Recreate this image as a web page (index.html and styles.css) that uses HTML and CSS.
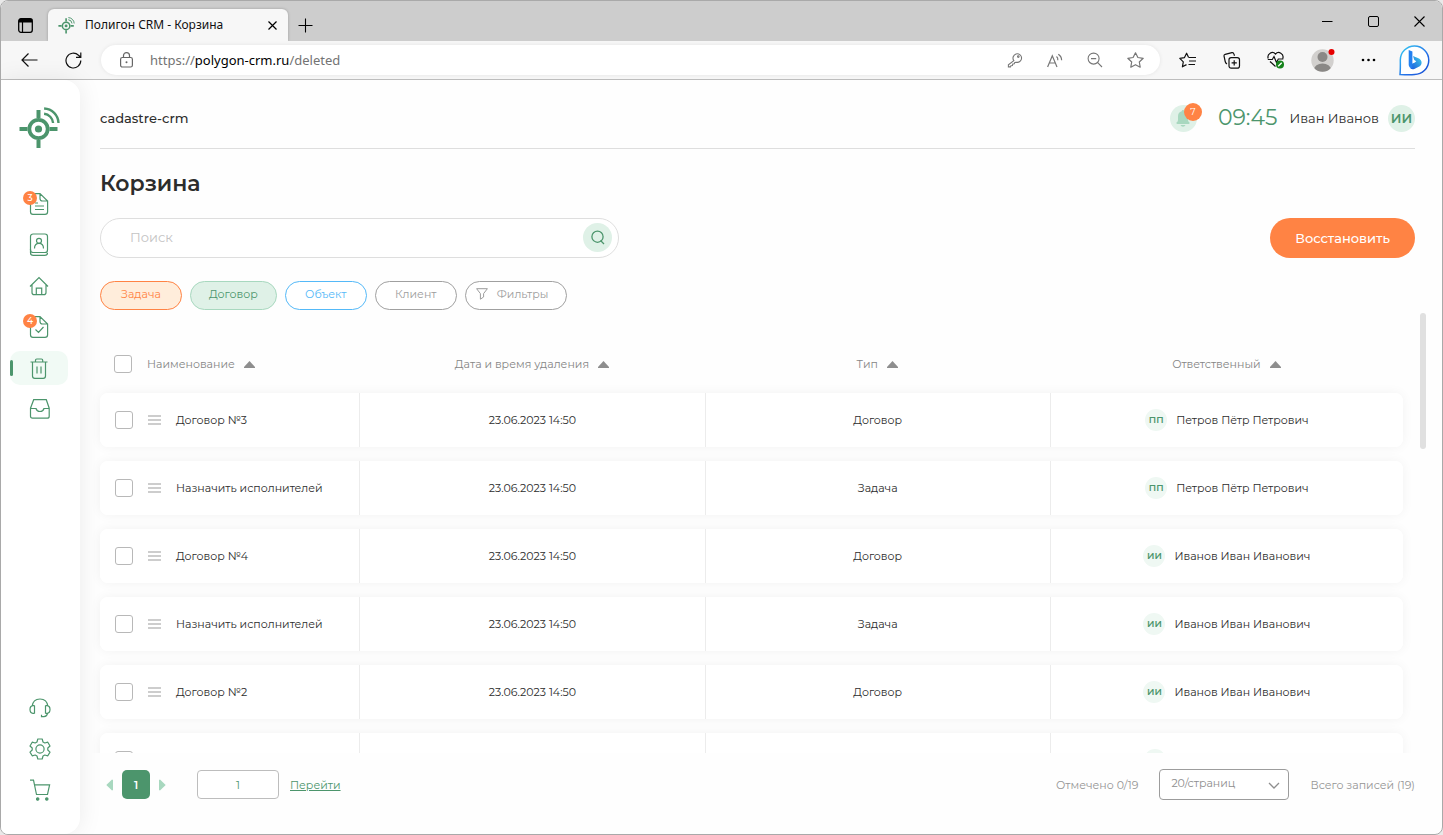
FILE: index.html
```html
<!DOCTYPE html>
<html lang="ru">
<head>
<meta charset="utf-8">
<title>Полигон CRM - Корзина</title>
<link rel="stylesheet" href="styles.css">
</head>
<body>
<svg class="sprite" aria-hidden="true">
  <symbol id="logo" viewBox="0 0 40 42">
    <g fill="none" stroke="#4c956c">
      <circle cx="19" cy="22" r="9.2" stroke-width="3.8"/>
      <path d="M0 22h8M30 22h8M19 3v8M19 33v8" stroke-width="4"/>
      <path d="M24.6 1.500A15 15 0 0 1 39 16M24.6 6.800A10 10 0 0 1 33.6 16" stroke-width="2.4"/>
    </g>
    <circle cx="19" cy="22" r="3.6" fill="#4c956c"/>
  </symbol>
  <symbol id="drag" viewBox="0 0 13 10"><path d="M0 1h13M0 5h13M0 9h13" stroke="#bdbdbd" stroke-width="1.6"/></symbol>
  <symbol id="sort" viewBox="0 0 11 7"><path d="M5.5 0L11 6v1H0V6z" fill="#8e8e8e"/></symbol>
</svg>

<div class="window">
  <div class="tabbar">
    <button class="chrome-btn tabs-menu" aria-label="Меню вкладок"><svg width="15" height="15" viewBox="0 0 15 15"><rect x=".7" y=".7" width="13.6" height="13.6" rx="2.2" fill="none" stroke="#000" stroke-width="1.3"/><path d="M1 1h13v3.6H1z"/><path d="M4.5 4v10" stroke="#000" stroke-width="1.2"/></svg></button>
    <div class="tab">
      <svg width="17" height="17"><use href="#logo"/></svg>
      <span class="tab-title">Полигон CRM - Корзина</span>
      <button class="chrome-btn" aria-label="Закрыть вкладку"><svg width="9" height="9" viewBox="0 0 9 9"><path d="M.5.5l8 8M8.500.5l-8 8" stroke="#000" stroke-width="1.2"/></svg></button>
    </div>
    <button class="chrome-btn new-tab" aria-label="Новая вкладка"><svg width="15" height="15" viewBox="0 0 15 15"><path d="M7.500.5v14M.5 7.500h14" stroke="#000" stroke-width="1.1"/></svg></button>
    <div class="window-controls">
      <button class="chrome-btn" aria-label="Свернуть"><svg width="11" height="11" viewBox="0 0 11 11"><path d="M0 5.500h10.500" stroke="#000"/></svg></button>
      <button class="chrome-btn" aria-label="Развернуть"><svg width="11" height="11" viewBox="0 0 11 11"><rect x=".5" y=".5" width="10" height="10" rx="1.500" fill="none" stroke="#000"/></svg></button>
      <button class="chrome-btn" aria-label="Закрыть"><svg width="11" height="11" viewBox="0 0 11 11"><path d="M.5.5l10 10M10.500.5l-10 10" stroke="#000" stroke-width="1.100"/></svg></button>
    </div>
  </div>

  <div class="toolbar">
    <button class="chrome-btn back" aria-label="Назад"><svg width="17" height="14" viewBox="0 0 17 14"><path d="M16.500 7H1M7.500.5L1 7l6.500 6.500" fill="none" stroke="#111" stroke-width="1.200"/></svg></button>
    <button class="chrome-btn reload" aria-label="Обновить"><svg width="17" height="17" viewBox="0 0 17 17"><path d="M15.800 8.500A7.400 7.400 0 1 1 13.500 3.200L15.500 5M15.800.5V5.300H11" fill="none" stroke="#111" stroke-width="1.200"/></svg></button>
    <div class="address">
      <svg width="13" height="16" viewBox="0 0 13 16"><rect x=".6" y="5.500" width="11.800" height="9.500" rx="1.800" fill="none" stroke="#666" stroke-width="1.200"/><path d="M3.500 5.500V3.600a3 3 0 0 1 6 0v1.900" fill="none" stroke="#666" stroke-width="1.200"/><circle cx="6.500" cy="10.300" r="1" fill="#666"/></svg>
      <span class="url">https://<b>polygon-crm.ru</b>/deleted</span>
      <div class="address-icons">
        <svg width="16" height="16" viewBox="0 0 16 16" fill="none" stroke="#777" stroke-width="1.100"><path d="M6.800 8.600A4.300 4.300 0 1 1 9 10.200l-1.200.3-.5 1.300-1.500.2-.4 1.500-1.500.2-.4 1.200H1.400v-2.100z"/><circle cx="11.300" cy="4.600" r=".8"/></svg>
        <svg width="16" height="15" viewBox="0 0 16 15" fill="none" stroke="#777" stroke-width="1.200"><path d="M.6 14L5.300 2.800 10 14M2.300 10h6M9.500 3.500q1.600 1.300 1.300 3.700M11.300 1.200q3.400 2.300 3.300 6"/></svg>
        <svg width="16" height="16" viewBox="0 0 16 16" fill="none" stroke="#777" stroke-width="1.100"><circle cx="6.600" cy="6.600" r="5.500"/><path d="M4 6.600h5.200M10.700 10.700l4.300 4.300"/></svg>
        <svg width="17" height="16" viewBox="0 0 17 16" fill="none" stroke="#777" stroke-width="1.200" stroke-linejoin="round"><path d="M8.500.8l2.400 4.700 5.300.8-3.900 3.700.9 5.200-4.700-2.500-4.700 2.500.9-5.200L.8 6.300l5.300-.8z"/></svg>
      </div>
    </div>
    <div class="tool-icons">
      <svg width="18" height="17" viewBox="0 0 18 17" fill="none" stroke="#111" stroke-width="1.200" stroke-linejoin="round"><path d="M9.500 5.300L7.600 1.200 5.500 5.600.8 6.300l3.500 3.500-.9 5L7.500 12.600M9.500 5.500H17M10 9h7M9.500 12.500H16"/></svg>
      <svg width="18" height="17" viewBox="0 0 18 17" fill="none" stroke="#111" stroke-width="1.200"><rect x="6" y="5.600" width="10.500" height="10.500" rx="2.200"/><path d="M11.200 8.300v5.200M8.600 10.900h5.200M4 12Q2.600 11.300 2.200 9.500L1.100 4.400Q.7 2.800 2.200 2.300L8.900.7q1.600-.3 2 1.200l.6 1.900"/></svg>
      <svg width="18" height="18" viewBox="0 0 18 18" fill="none" stroke="#111" stroke-width="1.200"><path d="M1.200 7.500C-.3 2.700 5.600-.5 8.500 3.100 11.400-.5 17.300 2.700 15.800 7.500M3 10.500l5.500 5M.8 8.500h4.500L7 5.500l2.500 6 1.800-3.500h5"/><circle cx="13" cy="13.600" r="4" fill="#14821a" stroke="none"/><path d="M11.200 15.200l3.500-3.500" stroke="#fff" stroke-width="1.300"/></svg>
      <svg width="24" height="24" viewBox="0 0 24 24"><clipPath id="face"><circle cx="11.500" cy="12.500" r="11.200"/></clipPath><g clip-path="url(#face)"><path d="M0 0h24v24H0z" fill="#d2d0ce"/><circle cx="11.500" cy="9" r="5" fill="#8a8886"/><ellipse cx="11.500" cy="21.500" rx="8.500" ry="6" fill="#8a8886"/></g><circle cx="20.500" cy="4" r="3" fill="#e60000"/></svg>
      <svg width="15" height="4" viewBox="0 0 15 4"><circle cx="2" cy="2" r="1.300"/><circle cx="7.500" cy="2" r="1.300"/><circle cx="13" cy="2" r="1.300"/></svg>
      <svg class="bing" width="31" height="31" viewBox="0 0 31 31"><defs><linearGradient id="bing" x1="0" y1="0" x2="1" y2="1"><stop offset="0" stop-color="#37cdf2"/><stop offset=".6" stop-color="#2470e8"/><stop offset="1" stop-color="#174ad0"/></linearGradient><linearGradient id="bowl" x1="0" y1="1" x2="1" y2="0"><stop offset="0" stop-color="#1b55dc"/><stop offset="1" stop-color="#3fd0e8"/></linearGradient></defs><path d="M15.500 1a14 14 0 1 1 0 28.500Q11 30 1 29.500 1.500 24 1.300 15A14.200 14.200 0 0 1 15.500 1z" fill="#fff" stroke="url(#bing)" stroke-width="1.500"/><path d="M13.300 18.500q2.400-.4 4-2.200l-2-1.200-1.300-4.100 4.800 1.900q3.800 1.400 3.800 4.900 0 2.800-3.300 4.300l-4 1.900q-2.400.8-4-.7z" fill="url(#bowl)"/><path d="M9.700 5l3.700 1.500v17Q9.700 23 9.700 19.500z" fill="#2380f0"/></svg>
    </div>
  </div>

  <div class="app">
    <nav class="sidebar" aria-label="Основное меню">
      <a class="brand" href="#" aria-label="Полигон CRM"><svg width="41" height="42"><use href="#logo"/></svg></a>
      <div class="menu">
        <a class="item" href="#" aria-label="Договоры"><svg width="20" height="22" viewBox="0 0 20 22"><path d="M11 .6H4Q1.500.6 1.500 3.200v15.500Q1.500 21.300 4 21.300h12q2.600 0 2.600-2.600V8zM11 .6V5.500Q11 8 13.500 8h5M6 13h9M6 16.500h9M6 10h3"/></svg><span class="count">3</span></a>
        <a class="item" href="#" aria-label="Клиенты"><svg width="20" height="24" viewBox="0 0 20 24"><rect x="1.500" y="1" width="17" height="18.500" rx="2.600"/><path d="M1.500 16v3.800q0 2.600 2.600 2.600h11.800q2.600 0 2.600-2.600"/><circle cx="10" cy="7.800" r="2.500"/><path d="M5.500 15.500q0-5.200 4.500-5.200t4.500 5.200"/></svg></a>
        <a class="item" href="#" aria-label="Объекты"><svg width="20" height="20" viewBox="0 0 20 20"><path d="M1 10.500L10 1.500l9 9M3 8.800v7.600q0 2.200 2.200 2.200h9.600q2.200 0 2.200-2.200V8.800M7.300 18.500v-6.400h5.400v6.400"/></svg></a>
        <a class="item" href="#" aria-label="Задачи"><svg width="20" height="22" viewBox="0 0 20 22"><path d="M11 .6H4Q1.500.6 1.500 3.200v15.500Q1.500 21.300 4 21.300h12q2.600 0 2.600-2.600V8zM11 .6V5.500Q11 8 13.500 8h5M6.500 13.500l3 3 5-5.500"/></svg><span class="count">4</span></a>
        <a class="item active" href="#" aria-label="Корзина" aria-current="page"><svg width="20" height="21" viewBox="0 0 20 21"><path d="M1.500 4h17M6.500 4V2.200Q6.500 1 7.800 1h4.600q1.300 0 1.300 1.200V4M3.500 4v14q0 2.300 2.300 2.300h8.400q2.300 0 2.300-2.300V4M8 8.500v7M12 8.500v7"/></svg></a>
        <a class="item" href="#" aria-label="Архив"><svg width="22" height="20" viewBox="0 0 22 20"><path d="M4.700.7h12.600l2.900 8.500v8q0 2-2 2H3.500q-2 0-2-2v-8zM1.500 9.500H7q.8 3 4 3t4-3h5.300"/></svg></a>
      </div>
      <div class="menu">
        <a class="item" href="#" aria-label="Поддержка"><svg width="22" height="20" viewBox="0 0 22 20"><path d="M3 8.500Q4 1 11 1t8 7.500M5.500 7.500v8M16.500 7.500v8M5.500 7.700H4Q1 8 1 11.500T4 15.400h1.500M16.500 7.700H18q3 .3 3 3.800t-3 3.900h-1.500M18.500 15.400q-.5 3.200-3.500 3.200h-2.500v-1.800"/></svg></a>
        <a class="item" href="#" aria-label="Настройки"><svg width="22" height="22" viewBox="0 0 22 22"><path d="M8.800 1h4.400l.8 3 1.800 1 3-.8 2.200 3.800L18.800 10v2l2.200 2.100-2.200 3.700-3-.8-1.800 1-.8 3H8.800l-.8-3-1.800-1-3 .8L1 14.100 3.200 12v-2L1 8l2.200-3.800 3 .8L8 4z" stroke-linejoin="round"/><circle cx="11" cy="11" r="4.100"/></svg></a>
        <a class="item" href="#" aria-label="Покупки"><svg width="22" height="22" viewBox="0 0 22 22"><path d="M1 1.200h3.500L7.500 15.500h11L20.600 5.800H5.500"/><circle cx="8.700" cy="20" r="1.200" fill="#4c956c"/><circle cx="17.800" cy="20" r="1.200" fill="#4c956c"/></svg></a>
      </div>
    </nav>

    <main class="main">
      <header class="topline">
        <span class="org">cadastre-crm</span>
        <div class="user">
          <button class="bell" aria-label="Уведомления"><svg width="16" height="17" viewBox="0 0 16 17" fill="#a8d8bf"><path d="M8 0q1.200 0 1.300 1.300 3.700.9 3.700 5V10q0 1.500 1.500 2.600.5.900-.5 1.400H2q-1-.5-.5-1.400Q3 11.500 3 10V6.300q0-4.100 3.700-5Q6.800 0 8 0zM5.500 15h5Q9.800 16.800 8 16.800T5.500 15z"/></svg><span class="bell-count">7</span></button>
          <time class="clock">09:45</time>
          <span class="name">Иван Иванов</span>
          <span class="avatar big">ИИ</span>
        </div>
      </header>

      <h1>Корзина</h1>

      <div class="actions">
        <form class="search" role="search">
          <input type="text" placeholder="Поиск" aria-label="Поиск">
          <button type="button" aria-label="Найти"><svg width="14" height="15" viewBox="0 0 14 15" fill="none" stroke="#4c956c" stroke-width="1.300"><circle cx="6.500" cy="6.700" r="5.600"/><path d="M9.500 10.500l3.500 3.500"/></svg></button>
        </form>
        <button class="restore">Восстановить</button>
      </div>

      <div class="filters">
        <button class="chip orange">Задача</button>
        <button class="chip green">Договор</button>
        <button class="chip blue">Объект</button>
        <button class="chip">Клиент</button>
        <button class="chip with-icon"><svg width="12" height="12" viewBox="0 0 12 12" fill="none" stroke="#9c9c9c" stroke-linejoin="round"><path d="M.6.700h10.800L7.600 5.600V9L4.400 11.200V5.600z"/></svg>Фильтры</button>
      </div>

      <div class="list">
        <div class="viewport">
          <table>
            <colgroup><col class="col-title"><col class="col-mid"><col class="col-mid"><col></colgroup>
            <thead>
              <tr>
                <th><div class="cell start"><input type="checkbox" aria-label="Выбрать все">Наименование<svg width="11" height="7"><use href="#sort"/></svg></div></th>
                <th><div class="cell">Дата и время удаления<svg width="11" height="7"><use href="#sort"/></svg></div></th>
                <th><div class="cell">Тип<svg width="11" height="7"><use href="#sort"/></svg></div></th>
                <th><div class="cell">Ответственный<svg width="11" height="7"><use href="#sort"/></svg></div></th>
              </tr>
            </thead>
            <tbody>
              <tr><td><label class="cell start"><input type="checkbox"><svg width="13" height="10"><use href="#drag"/></svg>Договор №3</label></td><td>23.06.2023 14:50</td><td>Договор</td><td><div class="cell"><span class="avatar">ПП</span>Петров Пётр Петрович</div></td></tr>
              <tr><td><label class="cell start"><input type="checkbox"><svg width="13" height="10"><use href="#drag"/></svg>Назначить исполнителей</label></td><td>23.06.2023 14:50</td><td>Задача</td><td><div class="cell"><span class="avatar">ПП</span>Петров Пётр Петрович</div></td></tr>
              <tr><td><label class="cell start"><input type="checkbox"><svg width="13" height="10"><use href="#drag"/></svg>Договор №4</label></td><td>23.06.2023 14:50</td><td>Договор</td><td><div class="cell"><span class="avatar">ИИ</span>Иванов Иван Иванович</div></td></tr>
              <tr><td><label class="cell start"><input type="checkbox"><svg width="13" height="10"><use href="#drag"/></svg>Назначить исполнителей</label></td><td>23.06.2023 14:50</td><td>Задача</td><td><div class="cell"><span class="avatar">ИИ</span>Иванов Иван Иванович</div></td></tr>
              <tr><td><label class="cell start"><input type="checkbox"><svg width="13" height="10"><use href="#drag"/></svg>Договор №2</label></td><td>23.06.2023 14:50</td><td>Договор</td><td><div class="cell"><span class="avatar">ИИ</span>Иванов Иван Иванович</div></td></tr>
              <tr><td><div class="cell start"><input type="checkbox" aria-label="Выбрать запись"></div></td><td></td><td></td><td><div class="cell"><span class="avatar"></span><span class="name-slot"></span></div></td></tr>
            </tbody>
          </table>
        </div>
        <div class="scrollbar"><div class="thumb"></div></div>
      </div>

      <footer class="footer">
        <div class="pager">
          <button class="arrow" aria-label="Предыдущая страница"><svg width="7" height="12" viewBox="0 0 7 12"><path d="M7 1v10L6 11.500.3 6 6 .5z" fill="#a8d8bf"/></svg></button>
          <button class="page">1</button>
          <button class="arrow" aria-label="Следующая страница"><svg width="7" height="12" viewBox="0 0 7 12"><path d="M0 1v10l1 .5L6.700 6 1 .5z" fill="#a8d8bf"/></svg></button>
        </div>
        <input class="page-input" type="text" value="1" aria-label="Номер страницы">
        <a class="go" href="#">Перейти</a>
        <span class="note marked">Отмечено 0/19</span>
        <div class="page-size">
          <select aria-label="Записей на странице"><option>20/страниц</option></select>
          <svg width="12" height="7" viewBox="0 0 12 7"><path d="M1 1l5 5 5-5" fill="none" stroke="#8e8e8e" stroke-width="1.300"/></svg>
        </div>
        <span class="note">Всего записей (19)</span>
      </footer>
    </main>
  </div>
</div>
</body>
</html>
```
FILE: styles.css
```css
* { box-sizing: border-box; }

body {
  margin: 0;
  background: #e9e9e9;
  color: #2c2c2c;
  font: 400 11px/16px Montserrat, Inter, "Open Sans", sans-serif;
}

button, input, select { font: inherit; color: inherit; margin: 0; }
button { border: 0; padding: 0; background: none; cursor: pointer; }
svg { display: block; flex: none; }
.sprite { position: absolute; width: 0; height: 0; }

.window {
  display: flex;
  flex-direction: column;
  height: 100vh;
  overflow: hidden;
  border: 1px solid #a9a9a9;
  border-radius: 8px;
  background: #fefefe;
}

/* Browser chrome */
.chrome-btn { display: grid; place-items: center; }

.tabbar {
  display: flex;
  align-items: flex-end;
  height: 40px;
  background: #cdcdcd;
}
.tabs-menu { width: 48px; height: 32px; }
.tab {
  display: flex;
  align-items: center;
  gap: 10px;
  width: 240px;
  height: 32px;
  margin-left: -1px;
  padding: 0 11px 0 10px;
  border-radius: 6px 6px 0 0;
  background: #f7f7f7;
  box-shadow: 0 0 3px rgba(0, 0, 0, .25);
}
.tab-title {
  flex: 1;
  color: #111;
  font: 400 12px/16px "Noto Sans", sans-serif;
  white-space: nowrap;
}
.new-tab { width: 35px; height: 32px; }
.window-controls { display: flex; margin-left: auto; }
.window-controls .chrome-btn { width: 46px; height: 40px; }

.toolbar {
  display: flex;
  align-items: center;
  position: relative;
  height: 39px;
  border-bottom: 1px solid #bdbdbd;
  background: #f7f7f7;
}
.back { width: 56px; height: 38px; }
.reload { width: 32px; height: 38px; }
.address {
  display: flex;
  flex: 1;
  align-items: center;
  height: 30px;
  margin-left: 12px;
  padding: 0 16px 0 19px;
  border-radius: 15px;
  background: #fff;
  box-shadow: 0 0 4px rgba(0, 0, 0, .08);
}
.url {
  margin-left: 17px;
  color: #737373;
  font: 400 13px/18px "Noto Sans", sans-serif;
}
.url b { color: #000; font-weight: 400; }
.address-icons { display: flex; align-items: center; gap: 24px; margin-left: auto; }
.tool-icons { display: flex; align-items: center; gap: 26px; padding: 0 12px 0 19px; }
.bing { margin-left: -3px; }

/* App shell */
.app { display: flex; flex: 1; min-height: 0; }

.sidebar {
  display: flex;
  flex-direction: column;
  z-index: 1;
  width: 79px;
  padding: 27px 12px 27px 9px;
  border-radius: 0 16px 16px 0;
  background: #fff;
  box-shadow: 0 0 24px rgba(0, 0, 0, .08);
}
.brand { padding-left: 9px; }
.menu { display: grid; gap: 7px; }
.brand + .menu { margin: 38px 0 auto; }
.item {
  display: grid;
  align-items: center;
  position: relative;
  height: 34px;
  padding-left: 19px;
  border-radius: 10px;
}
.item svg { fill: none; stroke: #4c956c; stroke-width: 1.2; }
.item.active { background: #f1faf5; }
.item.active::before {
  content: "";
  position: absolute;
  top: 9px;
  left: 0;
  width: 3px;
  height: 16px;
  border-radius: 2px;
  background: #4c956c;
}
.count {
  position: absolute;
  top: 4px;
  left: 13px;
  width: 14px;
  border-radius: 7px;
  background: #ff8344;
  color: #fff;
  font-size: 9px;
  font-weight: 500;
  line-height: 14px;
  text-align: center;
}
.item, .go { text-decoration: none; }

.main {
  display: flex;
  flex: 1;
  flex-direction: column;
  min-width: 0;
  padding: 0 27px 18px 20px;
}

.topline {
  display: flex;
  align-items: center;
  justify-content: space-between;
  height: 69px;
  padding-top: 8px;
  border-bottom: 1px solid #dedede;
}
.org { font-size: 13px; font-weight: 500; }
.user { display: flex; align-items: center; }
.bell {
  display: grid;
  place-items: center;
  position: relative;
  width: 27px;
  height: 27px;
  border-radius: 50%;
  background: #dff1e7;
}
.bell-count {
  position: absolute;
  top: -2px;
  left: 14px;
  width: 18px;
  border-radius: 9px;
  background: #ff8344;
  color: #fff;
  font-size: 9px;
  line-height: 18px;
}
.clock { margin-left: 21px; color: #4c956c; font-size: 22px; line-height: 28px; }
.name { margin: 0 9px 0 12px; font-size: 13px; }
.avatar {
  display: grid;
  place-items: center;
  width: 22px;
  height: 22px;
  border-radius: 50%;
  background: #eff8f3;
  color: #4c956c;
  font-size: 9px;
  font-weight: 600;
}
.avatar.big { width: 27px; height: 27px; background: #dff1e7; font-size: 13px; }
.name-slot { width: 134px; }

h1 { margin: 20px 0; font-size: 22px; font-weight: 600; line-height: 29px; }

.actions { display: flex; justify-content: space-between; gap: 20px; }
.search {
  display: flex;
  flex: 0 1 519px;
  align-items: center;
  height: 40px;
  padding: 0 6px 2px 29px;
  border: 1px solid #dedede;
  border-radius: 20px;
  background: #fff;
}
.search input {
  flex: 1;
  min-width: 0;
  padding: 0;
  border: 0;
  outline: 0;
  background: none;
  font-size: 13px;
}
.search input::placeholder { color: #c4c4c4; }
.search button {
  display: grid;
  place-items: center;
  width: 29px;
  height: 29px;
  border-radius: 50%;
  background: #dff1e7;
}
.restore {
  height: 40px;
  padding: 0 25px;
  border-radius: 20px;
  background: #ff8344;
  color: #fff;
  font-size: 13px;
  font-weight: 500;
}

.filters { display: flex; gap: 8px; margin-top: 23px; }
.chip {
  min-width: 82px;
  height: 29px;
  padding: 0 18px 3px;
  border: 1px solid #a0a0a0;
  border-radius: 15px;
  background: #fff;
  color: #9c9c9c;
}
.chip.orange { border-color: #ff8344; background: #ffeddb; color: #ff8344; }
.chip.green { border-color: #a8d8bf; background: #dff1e7; color: #4c956c; }
.chip.blue { border-color: #54b9f8; color: #54b9f8; }
.chip.with-icon { display: flex; align-items: center; gap: 9px; padding: 0 18px 3px 10px; }

/* Records */
.list { display: flex; flex: 1; gap: 5px; min-height: 0; margin: 3px -12px 0 -20px; }
.viewport { flex: 1; overflow: hidden; padding: 22px 12px 0 20px; }
.scrollbar { width: 7px; padding-right: 1px; }
.thumb { height: 31%; border-radius: 3px; background: #e0e0e0; }

table {
  width: 100%;
  border-collapse: separate;
  border-spacing: 0 14px;
  table-layout: fixed;
}
.col-title { width: 19.9%; }
.col-mid { width: 26.5%; }
th, td { padding: 0; text-align: center; }
th { height: 30px; color: #858585; font-weight: 400; }
td { height: 54px; background: #fff; }
td + td { border-left: 1px solid #ececec; }
tbody tr { border-radius: 8px; box-shadow: 0 0 12px rgba(0, 0, 0, .05); }
td:first-child { border-radius: 8px 0 0 8px; }
td:last-child { border-radius: 0 8px 8px 0; }

.cell { display: flex; align-items: center; justify-content: center; gap: 9px; }
.cell.start { justify-content: flex-start; gap: 15px; padding-left: 15px; }
th .cell.start { gap: 9px; padding-left: 14px; }
th .cell.start input { margin-right: 6px; }
input[type="checkbox"] {
  appearance: none;
  flex: none;
  width: 18px;
  height: 18px;
  border: 1px solid #b8b8b8;
  border-radius: 3px;
  background: #fff;
}

/* Footer */
.footer { display: flex; align-items: center; height: 63px; }
.pager { display: flex; align-items: center; gap: 9px; margin-left: 6px; }
.page {
  width: 28px;
  height: 29px;
  border-radius: 5px;
  background: #4c956c;
  color: #fff;
  font-weight: 600;
}
.page-input {
  width: 82px;
  height: 29px;
  margin: 0 11px 0 31px;
  border: 1px solid #bdbdbd;
  border-radius: 4px;
  background: #fff;
  color: #4c956c;
  text-align: center;
}
.go { color: #4c956c; text-decoration: underline; }
.note { color: #959595; }
.marked { margin-left: auto; }
.page-size { position: relative; margin: 0 21px; }
.page-size select {
  appearance: none;
  display: block;
  width: 130px;
  height: 31px;
  padding: 0 11px 3px;
  border: 1px solid #9c9c9c;
  border-radius: 4px;
  background: #fff;
  color: #8e8e8e;
}
.page-size svg { position: absolute; top: 13px; right: 9px; pointer-events: none; }
```
